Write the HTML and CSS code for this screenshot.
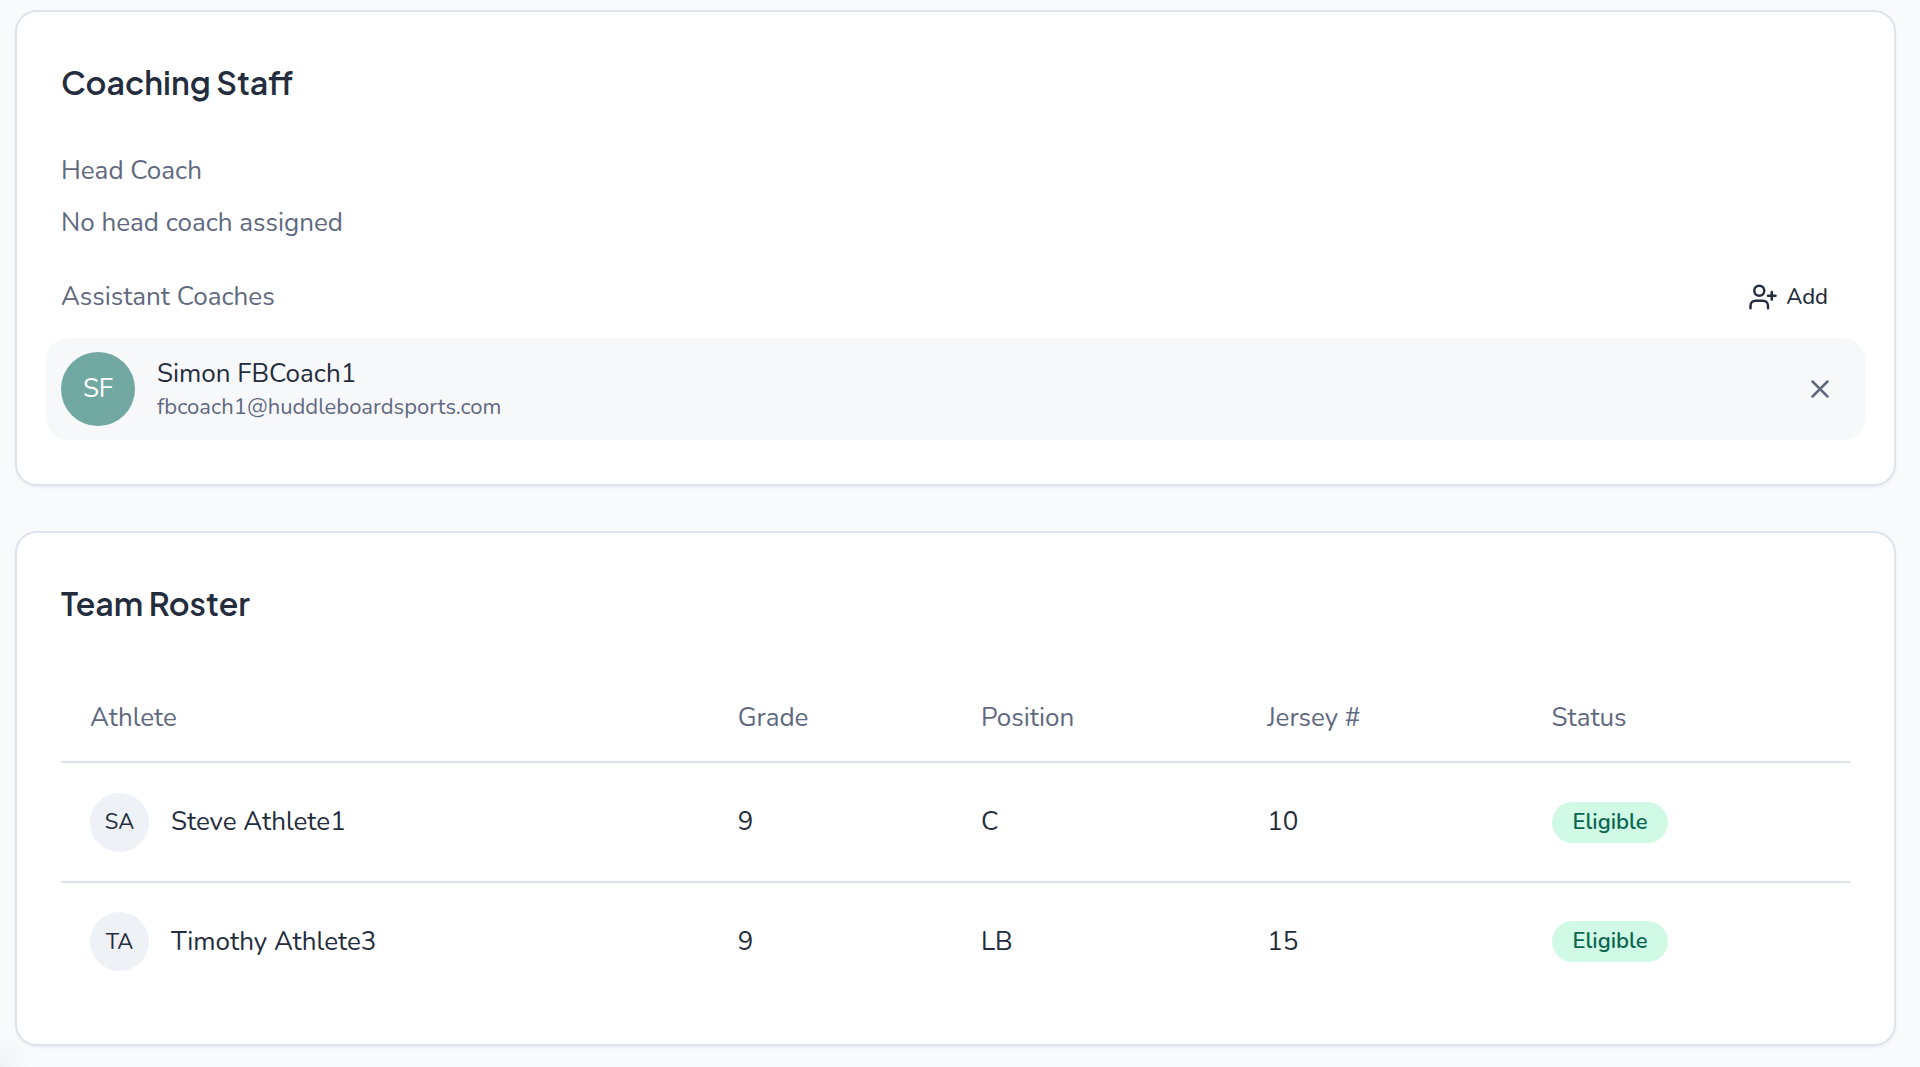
FILE: index.html
```html
<!DOCTYPE html>
<html lang="en">
<head>
    <meta charset="UTF-8">
    <meta name="viewport" content="width=device-width, initial-scale=1">
    <title>Team</title>
    <link rel="stylesheet" href="styles.css">
</head>
<body>
<main class="page">
    <section class="card">
        <h2 class="card-title">Coaching Staff</h2>
        <h3 class="label">Head Coach</h3>
        <p class="empty">No head coach assigned</p>
        <div class="label-row">
            <h3 class="label">Assistant Coaches</h3>
            <button type="button" class="btn-add">
                <svg class="icon" viewBox="0 0 24 24" aria-hidden="true">
                    <path d="M16 21v-2a4 4 0 0 0-4-4H6a4 4 0 0 0-4 4v2"/>
                    <circle cx="9" cy="7" r="4"/>
                    <path d="M19 8v6M22 11h-6"/>
                </svg>
                Add
            </button>
        </div>
        <div class="coach">
            <span class="avatar avatar-coach">SF</span>
            <div class="coach-info">
                <p class="coach-name">Simon FBCoach1</p>
                <p class="coach-email">fbcoach1@huddleboardsports.com</p>
            </div>
            <button type="button" class="btn-remove" aria-label="Remove coach">
                <svg class="icon" viewBox="0 0 24 24" aria-hidden="true">
                    <path d="M18 6 6 18M6 6l12 12"/>
                </svg>
            </button>
        </div>
    </section>

    <section class="card">
        <h2 class="card-title">Team Roster</h2>
        <table class="roster">
            <thead>
                <tr>
                    <th class="col-athlete">Athlete</th>
                    <th class="col-grade">Grade</th>
                    <th class="col-position">Position</th>
                    <th class="col-jersey">Jersey #</th>
                    <th class="col-status">Status</th>
                </tr>
            </thead>
            <tbody>
                <tr>
                    <td>
                        <div class="athlete"><span class="avatar">SA</span>Steve Athlete1</div>
                    </td>
                    <td>9</td>
                    <td>C</td>
                    <td>10</td>
                    <td><span class="badge">Eligible</span></td>
                </tr>
                <tr>
                    <td>
                        <div class="athlete"><span class="avatar">TA</span>Timothy Athlete3</div>
                    </td>
                    <td>9</td>
                    <td>LB</td>
                    <td>15</td>
                    <td><span class="badge">Eligible</span></td>
                </tr>
            </tbody>
        </table>
    </section>
</main>
</body>
</html>
```
FILE: styles.css
```css
*{ box-sizing: border-box; margin: 0; padding: 0;}
body{
    min-height: 100vh;
    background: #f8fafc radial-gradient(circle at 0 100%, rgba(0, 0, 0, .03), transparent 32px) no-repeat;
    color: #242d3d;
    font-family: Nunito, Lato, sans-serif;
    font-size: 26px;
    line-height: 36px;
}
button{
    border: 0;
    background: none;
    color: inherit;
    font: inherit;
    cursor: pointer;
}
.page{
    display: flex;
    flex-direction: column;
    gap: 45px;
    padding: 10px 24px 20px 15px;
}
.card{
    padding: 44px;
    background: #fff;
    border: 2px solid #dde3ea;
    border-radius: 22px;
    box-shadow: 0 2px 3px rgba(15, 23, 42, .05);
}
.card-title{
    margin-bottom: 45px;
    font-family: "Plus Jakarta Sans", Inter, sans-serif;
    font-size: 32px;
    font-weight: 600;
    line-height: 52px;
}
.label{
    color: #5f6980;
    font-size: 26px;
    font-weight: 400;
}
.empty{
    margin-top: 16px;
    color: #5f6980;
}
.label-row{
    display: flex;
    align-items: center;
    justify-content: space-between;
    margin: 30px 0 15px;
}
.icon{
    width: 30px;
    height: 30px;
    fill: none;
    stroke: currentColor;
    stroke-width: 2;
    stroke-linecap: round;
    stroke-linejoin: round;
}
.btn-add{
    display: flex;
    align-items: center;
    gap: 8px;
    height: 52px;
    padding: 0 22px;
    border-radius: 15px;
    font-size: 22px;
    font-weight: 500;
}
.coach{
    display: flex;
    align-items: center;
    gap: 22px;
    margin: 0 -15px;
    padding: 14px 15px;
    background: #f7f8fa;
    border-radius: 22px;
}
.coach-info{
    flex: 1;
}
.coach-name{
    line-height: 36px;
}
.coach-email{
    color: #5f6980;
    font-size: 22px;
    line-height: 30px;
}
.avatar{
    display: flex;
    flex: none;
    align-items: center;
    justify-content: center;
    width: 59px;
    height: 59px;
    border-radius: 50%;
    background: #eef1f6;
    font-size: 22px;
}
.avatar-coach{
    width: 74px;
    height: 74px;
    background: #72a8a2;
    color: #fff;
    font-size: 26px;
}
.btn-remove{
    display: flex;
    align-items: center;
    justify-content: center;
    width: 60px;
    height: 52px;
    color: #5f6980;
}
.roster{
    width: 100%;
    border-collapse: collapse;
    table-layout: fixed;
}
.roster th{
    height: 88px;
    padding: 0 29px;
    color: #5f6980;
    font-weight: 400;
    text-align: left;
}
.roster td{
    height: 120px;
    padding: 0 29px;
}
.roster tr{
    border-bottom: 2px solid #dde3ea;
}
.roster tbody tr:last-child{
    border-bottom: 0;
}
.roster tbody tr:last-child td{
    height: 118px;
}
.col-athlete{ width: 36.2%;}
.col-grade{ width: 13.6%;}
.col-position{ width: 16%;}
.col-jersey{ width: 15.9%;}
.col-status{ width: 18.3%;}
.athlete{
    display: flex;
    align-items: center;
    gap: 22px;
}
.badge{
    display: inline-block;
    padding: 5px 21px;
    border-radius: 21px;
    background: #d0fae5;
    color: #0b6650;
    font-size: 22px;
    font-weight: 600;
    line-height: 31px;
    vertical-align: middle;
}
```
